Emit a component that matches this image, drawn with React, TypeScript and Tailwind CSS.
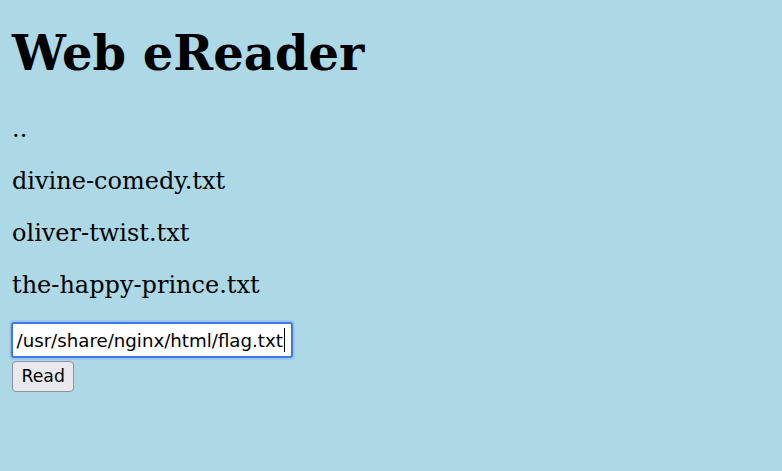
const files = ["..", "divine-comedy.txt", "oliver-twist.txt", "the-happy-prince.txt"];

export default function App() {
  return (
    <div className="min-h-screen bg-[#add8e6] px-[12px] pt-[25.5px] text-black font-['DejaVu_Serif',serif]">
      <h1 className="text-[48px] font-bold leading-[55.9px]">Web eReader</h1>

      {/* file listing */}
      <div className="mt-[34.8px] flex flex-col gap-[24px]">
        {files.map((f) => (
          <div key={f} className="text-[24px] leading-[27.9px]">
            {f}
          </div>
        ))}
      </div>

      <form
        className="-ml-[3px] mt-[20.4px] flex flex-col items-start font-['DejaVu_Sans',sans-serif]"
        onSubmit={(e) => e.preventDefault()}
      >
        <div className="rounded-[4px] bg-[#9fc6ec] p-[2px]">
          <div
            role="textbox"
            className="flex h-[36px] w-[282px] items-center rounded-[3px] border-[2.5px] border-[#3b7be0] bg-white px-[3.5px] text-[18.2px] text-black"
          >
            <span>/usr/share/nginx/html/flag.txt</span>
            <span className="ml-[1px] inline-block h-[24px] w-[1.5px] bg-black" />
          </div>
        </div>
        <button
          type="submit"
          className="ml-[3px] mt-[1px] h-[31px] rounded-[4px] border border-[#8f8f9d] bg-[#e9e9ed] px-[8.5px] text-[17.3px] leading-none text-black"
        >
          Read
        </button>
      </form>
    </div>
  );
}
